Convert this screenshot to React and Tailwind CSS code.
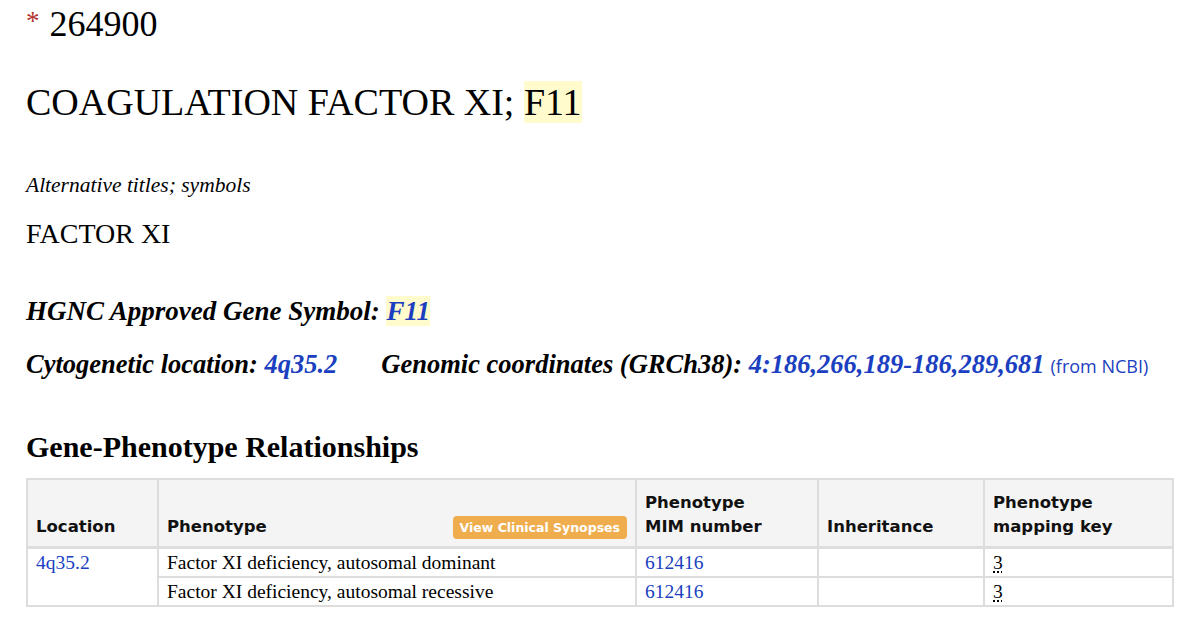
import React from "react";

const serif = "font-['Liberation_Serif',_'Times_New_Roman',_serif]";
const sans = "font-['DejaVu_Sans',_Verdana,_sans-serif]";

function Th({ children, className = "" }) {
  return (
    <th
      className={`border-2 border-b-[3px] border-[#dddddd] align-bottom text-left px-[8px] pt-[11px] pb-[7px] ${sans} font-bold text-[16.5px] leading-[24px] text-[#111] ${className}`}
    >
      {children}
    </th>
  );
}

function Td({ children, className = "", rowSpan }) {
  return (
    <td
      rowSpan={rowSpan}
      className={`border-2 border-[#dddddd] align-top px-[8px] pt-[4px] pb-[3px] text-[19.5px] leading-[20px] ${className}`}
    >
      {children}
    </td>
  );
}

export default function App() {
  const rows = [
    { phen: "Factor XI deficiency, autosomal dominant", mim: "612416", key: "3" },
    { phen: "Factor XI deficiency, autosomal recessive", mim: "612416", key: "3" },
  ];
  return (
    <div className={`w-[1200px] h-[630px] overflow-hidden bg-white pl-[26px] text-black ${serif}`}>
      <div className="h-[46px] pt-[4px] text-[36px] leading-[40px]">
        <span className="text-[#b5332e] text-[27px] leading-none align-[6px]">*</span>
        <span className="ml-[10px]">264900</span>
      </div>

      <div className="mt-[34px] text-[38px] leading-[44px]">
        COAGULATION FACTOR XI; <span className="bg-[#fffbcc]">F11</span>
      </div>

      <div className="mt-[49px] italic text-[21.5px] leading-[24px]">Alternative titles; symbols</div>

      <div className="mt-[21px] text-[28px] leading-[32px]">FACTOR XI</div>

      <div className="mt-[46px] italic font-bold text-[27px] leading-[30px]">
        HGNC Approved Gene Symbol: <span className="bg-[#fffbcc] text-[#1b3fc0]">F11</span>
      </div>

      <div className="mt-[23px] flex items-baseline italic font-bold text-[26.5px] leading-[30px]">
        <span>
          Cytogenetic location: <span className="text-[#1b3fc0]">4q35.2</span>
        </span>
        <span className="ml-[44px]">
          Genomic coordinates (GRCh38): <span className="text-[#1b3fc0]">4:186,266,189-186,289,681</span>
        </span>
        <span className="ml-[6px] not-italic font-normal text-[18px] text-[#1b3fc0] font-['Open_Sans',_sans-serif]">
          (from NCBI)
        </span>
      </div>

      <div className="mt-[49px] font-bold text-[30px] leading-[34px]">Gene-Phenotype Relationships</div>

      <table className="mt-[14px] w-[1146px] table-fixed border-collapse border-2 border-[#dddddd]">
        <colgroup>
          <col className="w-[131px]" />
          <col className="w-[478px]" />
          <col className="w-[182px]" />
          <col className="w-[166px]" />
          <col className="w-[189px]" />
        </colgroup>
        <thead>
          <tr className="bg-[#f4f4f4]">
            <Th>Location</Th>
            <Th>
              <div className="flex items-end justify-between">
                <span>Phenotype</span>
                <span
                  className={`rounded-[4px] bg-[#f0ad4e] px-[7px] text-[12.5px] leading-[23px] font-bold text-white ${sans}`}
                >
                  View Clinical Synopses
                </span>
              </div>
            </Th>
            <Th>
              Phenotype
              <br />
              MIM number
            </Th>
            <Th>Inheritance</Th>
            <Th>
              Phenotype
              <br />
              mapping key
            </Th>
          </tr>
        </thead>
        <tbody>
          {rows.map((r, i) => (
            <tr key={i}>
              {i === 0 && (
                <Td rowSpan={2} className="text-[#1b3fc0]">
                  4q35.2
                </Td>
              )}
              <Td>{r.phen}</Td>
              <Td className="text-[#1b3fc0]">{r.mim}</Td>
              <Td></Td>
              <Td>
                <span className="underline decoration-dotted underline-offset-[3px]">{r.key}</span>
              </Td>
            </tr>
          ))}
        </tbody>
      </table>
    </div>
  );
}
